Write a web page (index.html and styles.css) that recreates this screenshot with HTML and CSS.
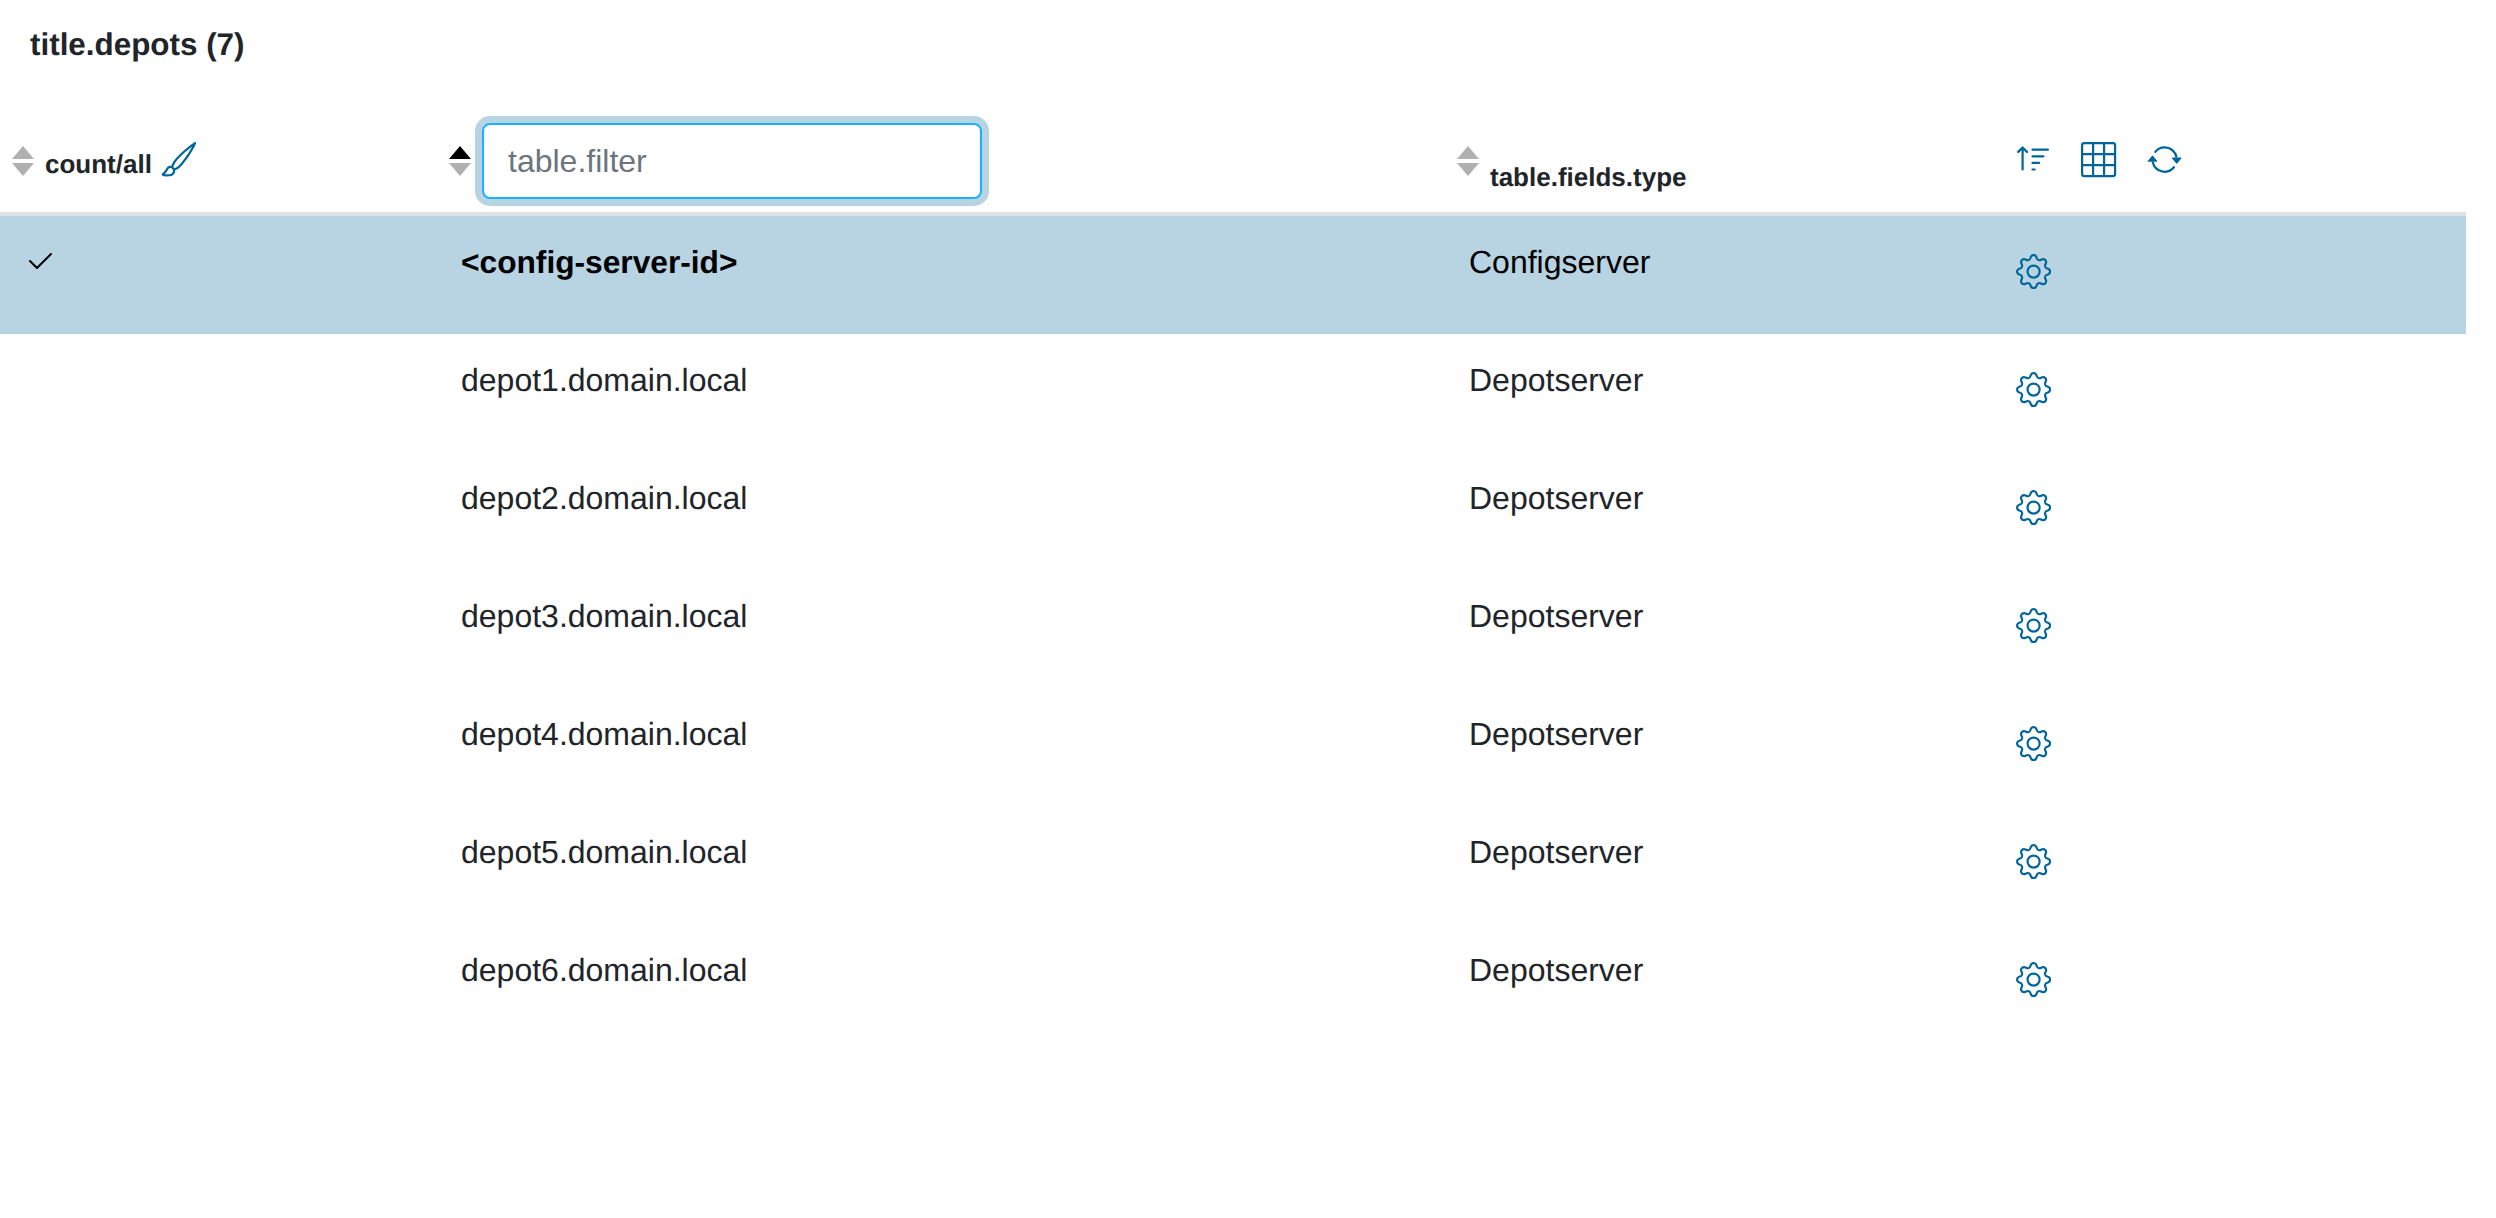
FILE: index.html
```html
<!DOCTYPE html>
<html lang="en">
<head>
<meta charset="UTF-8">
<meta name="viewport" content="width=device-width, initial-scale=1.0">
<title>title.depots</title>
<link rel="stylesheet" href="styles.css">
</head>
<body>
    <svg class="defs" width="0" height="0">
        <symbol id="i-gear" viewBox="0 0 16 16">
            <path d="M8 4.754a3.246 3.246 0 1 0 0 6.492 3.246 3.246 0 0 0 0-6.492zM5.754 8a2.246 2.246 0 1 1 4.492 0 2.246 2.246 0 0 1-4.492 0z"/>
            <path d="M9.796 1.343c-.527-1.79-3.065-1.79-3.592 0l-.094.319a.873.873 0 0 1-1.255.52l-.292-.16c-1.64-.892-3.433.902-2.54 2.541l.159.292a.873.873 0 0 1-.52 1.255l-.319.094c-1.79.527-1.79 3.065 0 3.592l.319.094a.873.873 0 0 1 .52 1.255l-.16.292c-.892 1.64.901 3.434 2.541 2.54l.292-.159a.873.873 0 0 1 1.255.52l.094.319c.527 1.79 3.065 1.79 3.592 0l.094-.319a.873.873 0 0 1 1.255-.52l.292.16c1.64.893 3.434-.902 2.54-2.541l-.159-.292a.873.873 0 0 1 .52-1.255l.319-.094c1.79-.527 1.79-3.065 0-3.592l-.319-.094a.873.873 0 0 1-.52-1.255l.16-.292c.893-1.64-.902-3.433-2.541-2.54l-.292.159a.873.873 0 0 1-1.255-.52l-.094-.319zm-2.633.283c.246-.835 1.428-.835 1.674 0l.094.319a1.873 1.873 0 0 0 2.693 1.115l.291-.16c.764-.415 1.6.42 1.184 1.185l-.159.292a1.873 1.873 0 0 0 1.116 2.692l.318.094c.835.246.835 1.428 0 1.674l-.319.094a1.873 1.873 0 0 0-1.115 2.693l.16.291c.415.764-.42 1.6-1.185 1.184l-.291-.159a1.873 1.873 0 0 0-2.693 1.116l-.094.318c-.246.835-1.428.835-1.674 0l-.094-.319a1.873 1.873 0 0 0-2.692-1.115l-.292.16c-.764.415-1.6-.42-1.184-1.185l.159-.291A1.873 1.873 0 0 0 1.945 8.93l-.319-.094c-.835-.246-.835-1.428 0-1.674l.319-.094A1.873 1.873 0 0 0 3.06 4.377l-.16-.292c-.415-.764.42-1.6 1.185-1.184l.292.159a1.873 1.873 0 0 0 2.692-1.115l.094-.319z"/>
        </symbol>
    </svg>

    <h1 class="page-title">title.depots (7)</h1>

    <table class="depots">
        <colgroup>
            <col class="col-check">
            <col class="col-id">
            <col class="col-type">
            <col class="col-actions">
        </colgroup>
        <thead>
            <tr>
                <th>
                    <div class="head">
                        <span class="sorter"><i class="up"></i><i class="down"></i></span>
                        <span class="head-label mid">count/all</span>
                        <svg class="icon brush" viewBox="0 0 16 16" fill="currentColor"><path d="M15.825.12a.5.5 0 0 1 .132.584c-1.53 3.43-4.743 8.17-7.095 10.64a6.067 6.067 0 0 1-2.373 1.534c-.018.227-.06.538-.16.868-.201.659-.667 1.479-1.708 1.74a8.118 8.118 0 0 1-3.078.132 3.659 3.659 0 0 1-.562-.135 1.382 1.382 0 0 1-.466-.247.714.714 0 0 1-.204-.288.622.622 0 0 1 .004-.443c.095-.245.316-.38.461-.452.394-.197.625-.453.867-.826.095-.144.184-.297.287-.472l.117-.198c.151-.255.326-.54.546-.848.528-.739 1.201-.925 1.746-.896.126.007.243.025.348.048.062-.172.142-.38.238-.608.261-.619.658-1.419 1.187-2.069 2.176-2.67 6.18-6.206 9.117-8.104a.5.5 0 0 1 .596.04zM4.705 11.912a1.23 1.23 0 0 0-.419-.1c-.246-.013-.573.05-.879.479-.197.275-.355.532-.5.777l-.105.177c-.106.181-.213.362-.32.528a3.39 3.39 0 0 1-.76.861c.69.112 1.736.111 2.657-.12.559-.139.843-.569.993-1.06a3.122 3.122 0 0 0 .126-.75l-.793-.792zm1.44.026c.12-.04.277-.1.458-.183a5.068 5.068 0 0 0 1.535-1.1c1.9-1.996 4.412-5.57 6.052-8.631-2.59 1.927-5.566 4.66-7.302 6.792-.442.543-.795 1.243-1.042 1.826-.121.288-.214.54-.275.72v.001l.575.575z"/></svg>
                    </div>
                </th>
                <th>
                    <div class="head">
                        <span class="sorter"><i class="up active"></i><i class="down"></i></span>
                        <input class="filter" type="text" placeholder="table.filter">
                    </div>
                </th>
                <th>
                    <div class="head">
                        <span class="sorter"><i class="up"></i><i class="down"></i></span>
                        <span class="head-label low">table.fields.type</span>
                    </div>
                </th>
                <th class="th-actions">
                    <div class="head tools">
                        <svg class="icon" viewBox="0 0 16 16" fill="currentColor"><path d="M3.5 12.5a.5.5 0 0 1-1 0V3.707L1.354 4.854a.5.5 0 1 1-.708-.708l2-1.999.007-.007a.498.498 0 0 1 .7.006l2 2a.5.5 0 1 1-.707.708L3.5 3.707V12.5zm3.5-9a.5.5 0 0 1 .5-.5h7a.5.5 0 0 1 0 1h-7a.5.5 0 0 1-.5-.5zM7.5 6a.5.5 0 0 0 0 1h5a.5.5 0 0 0 0-1h-5zm0 3a.5.5 0 0 0 0 1h3a.5.5 0 0 0 0-1h-3zm0 3a.5.5 0 0 0 0 1h1a.5.5 0 0 0 0-1h-1z"/></svg>
                        <svg class="icon" viewBox="0 0 16 16" fill="currentColor"><path d="M0 1.5A1.5 1.5 0 0 1 1.5 0h13A1.5 1.5 0 0 1 16 1.5v13a1.5 1.5 0 0 1-1.5 1.5h-13A1.5 1.5 0 0 1 0 14.5v-13zM1.5 1a.5.5 0 0 0-.5.5V5h4V1H1.5zM5 6H1v4h4V6zm1 4h4V6H6v4zm-1 1H1v3.5a.5.5 0 0 0 .5.5H5v-4zm1 0v4h4v-4H6zm5 0v4h3.5a.5.5 0 0 0 .5-.5V11h-4zm0-1h4V6h-4v4zm0-5h4V1.5a.5.5 0 0 0-.5-.5H11v4zm-1 0V1H6v4h4z"/></svg>
                        <svg class="icon" viewBox="0 0 16 16" fill="currentColor"><path d="M11.534 7h3.932a.25.25 0 0 1 .192.41l-1.966 2.36a.25.25 0 0 1-.384 0l-1.966-2.36a.25.25 0 0 1 .192-.41zm-11 2h3.932a.25.25 0 0 0 .192-.41L2.692 6.23a.25.25 0 0 0-.384 0L.342 8.59A.25.25 0 0 0 .534 9z"/><path fill-rule="evenodd" d="M8 3c-1.552 0-2.94.707-3.857 1.818a.5.5 0 1 1-.771-.636A6.002 6.002 0 0 1 13.917 7H12.9A5.002 5.002 0 0 0 8 3zM3.1 9a5.002 5.002 0 0 0 8.757 2.182.5.5 0 1 1 .771.636A6.002 6.002 0 0 1 2.083 9H3.1z"/></svg>
                    </div>
                </th>
            </tr>
        </thead>
        <tbody>
            <tr class="selected">
                <td><svg class="check" viewBox="0 0 16 16" fill="currentColor"><path d="M13.854 3.646a.5.5 0 0 1 0 .708l-7 7a.5.5 0 0 1-.708 0l-3.5-3.5a.5.5 0 1 1 .708-.708L6.5 10.293l6.646-6.647a.5.5 0 0 1 .708 0z"/></svg></td>
                <td class="name">&lt;config-server-id&gt;</td>
                <td>Configserver</td>
                <td class="td-actions"><svg class="icon" fill="currentColor"><use href="#i-gear"/></svg></td>
            </tr>
            <tr>
                <td></td>
                <td>depot1.domain.local</td>
                <td>Depotserver</td>
                <td class="td-actions"><svg class="icon" fill="currentColor"><use href="#i-gear"/></svg></td>
            </tr>
            <tr>
                <td></td>
                <td>depot2.domain.local</td>
                <td>Depotserver</td>
                <td class="td-actions"><svg class="icon" fill="currentColor"><use href="#i-gear"/></svg></td>
            </tr>
            <tr>
                <td></td>
                <td>depot3.domain.local</td>
                <td>Depotserver</td>
                <td class="td-actions"><svg class="icon" fill="currentColor"><use href="#i-gear"/></svg></td>
            </tr>
            <tr>
                <td></td>
                <td>depot4.domain.local</td>
                <td>Depotserver</td>
                <td class="td-actions"><svg class="icon" fill="currentColor"><use href="#i-gear"/></svg></td>
            </tr>
            <tr>
                <td></td>
                <td>depot5.domain.local</td>
                <td>Depotserver</td>
                <td class="td-actions"><svg class="icon" fill="currentColor"><use href="#i-gear"/></svg></td>
            </tr>
            <tr>
                <td></td>
                <td>depot6.domain.local</td>
                <td>Depotserver</td>
                <td class="td-actions"><svg class="icon" fill="currentColor"><use href="#i-gear"/></svg></td>
            </tr>
        </tbody>
    </table>
</body>
</html>
```

FILE: styles.css
```css
body {
    margin: 0;
    background: #fff;
    color: #212529;
    font-family: "Liberation Sans", Arial, sans-serif;
    font-size: 32px;
    line-height: 48px;
    text-rendering: geometricPrecision;
}
.defs {
    position: absolute;
}
.page-title {
    margin: 0;
    padding: 21px 30px 31px;
    font-size: 31.4px;
    line-height: 48px;
    font-weight: bold;
}
.depots {
    width: 2466px;
    border-collapse: separate;
    border-spacing: 0;
    table-layout: fixed;
}
.col-check { width: 437px; }
.col-id { width: 1008px; }
.col-type { width: 547px; }
.col-actions { width: 474px; }

.depots th {
    padding: 23px 12px 13px;
    border-bottom: 4px solid #dee2e6;
    text-align: left;
    font-weight: bold;
    font-size: 26px;
    line-height: 40px;
    vertical-align: top;
}
.head {
    display: flex;
    align-items: center;
    min-height: 76px;
}
.sorter {
    display: flex;
    flex-direction: column;
    gap: 4px;
    margin-right: 11px;
    flex: none;
}
.sorter i {
    display: block;
    width: 0;
    height: 0;
    border-left: 11px solid transparent;
    border-right: 11px solid transparent;
}
.sorter .up {
    border-bottom: 13px solid #b0b0b0;
}
.sorter .down {
    border-top: 13px solid #b0b0b0;
}
.sorter .up.active {
    border-bottom-color: #000;
}
.head-label.mid {
    margin-top: 6px;
}
.head-label.low {
    margin-top: 32px;
}
.icon {
    display: block;
    width: 35.2px;
    height: 35.2px;
    color: #006699;
    flex: none;
}
.brush {
    margin-left: 9px;
    margin-top: -3px;
}
.filter {
    box-sizing: border-box;
    width: 500px;
    height: 76px;
    padding: 0 24px;
    border: 2px solid #1ab2ff;
    border-radius: 8px;
    box-shadow: 0 0 0 7px #b8d3e2;
    outline: none;
    font-family: inherit;
    font-size: 32px;
    color: #212529;
}
.filter::placeholder {
    color: #6c757d;
    opacity: 1;
}
.depots .th-actions {
    padding-left: 24px;
}
.tools {
    gap: 30.3px;
    margin-top: -1px;
}

.depots td {
    height: 118px;
    box-sizing: border-box;
    padding: 22px 24px 24px;
    vertical-align: top;
}
.selected td {
    background: #b8d3e2;
    color: #000;
}
.depots .name {
    font-weight: bold;
    font-size: 31.7px;
}
.check {
    display: block;
    width: 32px;
    height: 32px;
    margin-top: 8px;
}
.depots .td-actions {
    padding-top: 38px;
}
```
